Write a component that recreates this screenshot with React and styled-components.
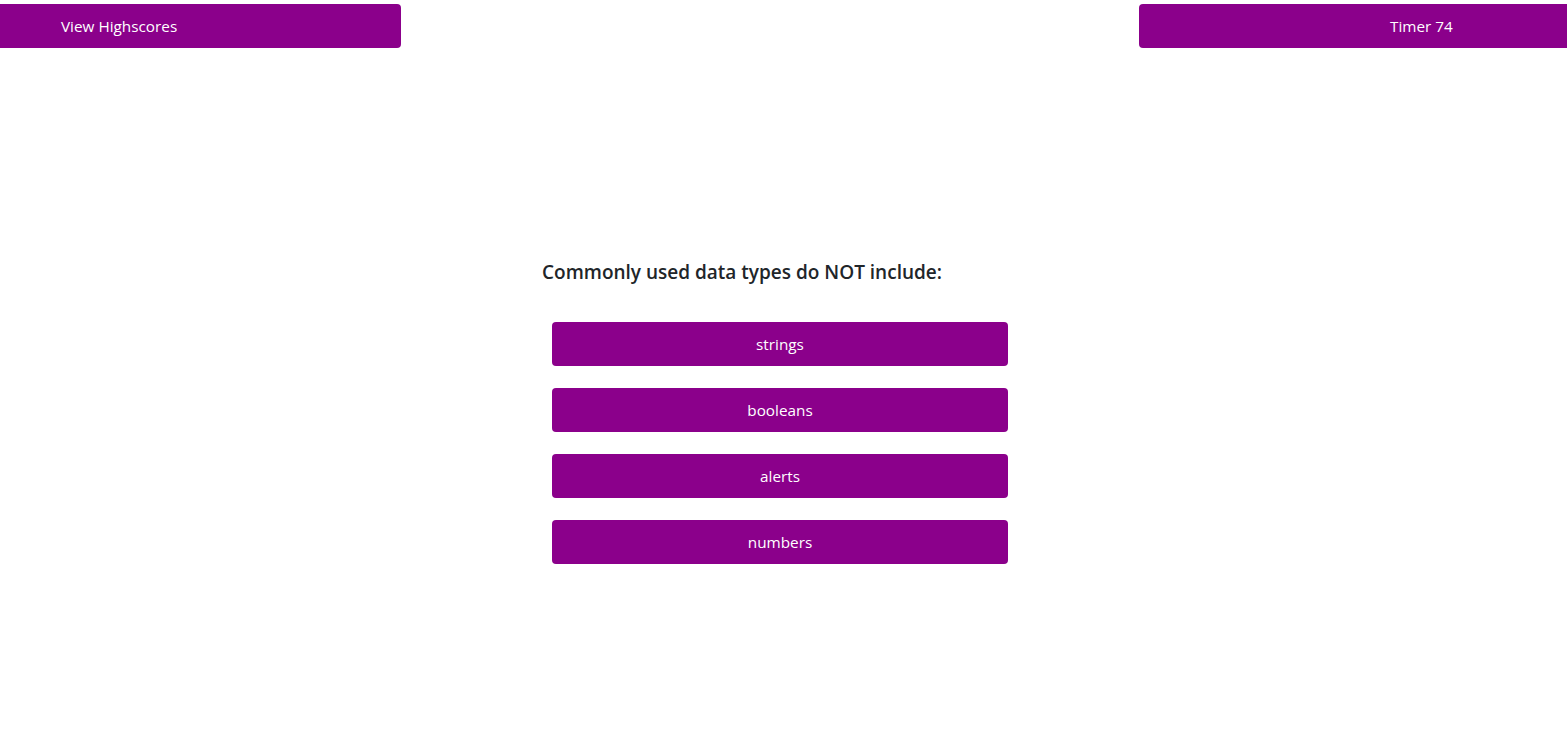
import React from "react";
import styled, { createGlobalStyle } from "styled-components";

const Global = createGlobalStyle`
  html, body { margin: 0; padding: 0; background: #fff; }
  body { font-family: "Open Sans", "Noto Sans", sans-serif; color: #212529; }
`;

const TopBar = styled.header`
  display: flex;
  justify-content: space-between;
  align-items: center;
  padding-top: 4px;
`;

const BarButton = styled.button`
  box-sizing: border-box;
  width: ${(p) => p.$width}px;
  height: 44px;
  padding: 0 0 0 ${(p) => p.$indent}px;
  border: none;
  background: #8b008b;
  color: #fff;
  font-family: "Open Sans", "Noto Sans", sans-serif;
  font-size: 15.3px;
  text-align: left;
  border-radius: ${(p) => (p.$side === "left" ? "0 4px 4px 0" : "4px 0 0 4px")};
  cursor: pointer;
`;

const Quiz = styled.main`
  width: 483px;
  margin: 212px auto 0;
  display: flex;
  flex-direction: column;
`;

const Question = styled.h2`
  margin: 0 0 38px;
  font-size: 19px;
  line-height: 24px;
  font-weight: 600;
  color: #212529;
`;

const Choices = styled.div`
  display: flex;
  flex-direction: column;
  gap: 22px;
  padding-left: 10px;
`;

const Choice = styled.button`
  width: 456px;
  height: 44px;
  border: none;
  border-radius: 4px;
  background: #8b008b;
  color: #fff;
  font-family: "Open Sans", "Noto Sans", sans-serif;
  font-size: 15.3px;
  cursor: pointer;
`;

const choices = ["strings", "booleans", "alerts", "numbers"];

export default function App() {
  return (
    <>
      <Global />
      <TopBar>
        <BarButton $side="left" $width={401} $indent={61}>View Highscores</BarButton>
        <BarButton $side="right" $width={428} $indent={251}>Timer 74</BarButton>
      </TopBar>
      <Quiz>
        <Question>Commonly used data types do NOT include:</Question>
        <Choices>
          {choices.map((c) => (
            <Choice key={c}>{c}</Choice>
          ))}
        </Choices>
      </Quiz>
    </>
  );
}
